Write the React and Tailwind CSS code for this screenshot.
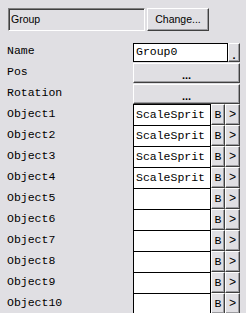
import React from "react";

const mono = { fontFamily: '"Liberation Mono", "Courier New", monospace' };

function RaisedButton({ className = "", children, style }) {
  return (
    <div
      className={
        "flex items-center justify-center bg-[#e0dfe3] border border-t-white border-l-white border-r-[#404040] border-b-[#404040] shadow-[inset_-1px_-1px_0_#9d9da1] " +
        className
      }
      style={style}
    >
      {children}
    </div>
  );
}

function LabelCell({ children }) {
  return (
    <div className="w-[133px] shrink-0 pl-[7px] pt-[3px] text-[11.5px] leading-[13px] text-black" style={mono}>
      {children}
    </div>
  );
}

function ObjectRow({ label, value }) {
  return (
    <div className="flex h-[21px]">
      <LabelCell>{label}</LabelCell>
      <div className="flex">
        <div
          className="w-[78px] h-[22px] bg-white border border-black pl-[2px] text-[11.5px] leading-[19px] text-black overflow-hidden whitespace-nowrap"
          style={mono}
        >
          {value}
        </div>
        <RaisedButton className="w-[14px] h-[21px] text-[11.5px] text-black leading-none" style={mono}>
          B
        </RaisedButton>
        <RaisedButton className="w-[15px] h-[21px] text-[12px] text-black leading-none" style={mono}>
          &gt;
        </RaisedButton>
      </div>
    </div>
  );
}

export default function App() {
  const objects = [
    ["Object1", "ScaleSprit"],
    ["Object2", "ScaleSprit"],
    ["Object3", "ScaleSprit"],
    ["Object4", "ScaleSprit"],
    ["Object5", ""],
    ["Object6", ""],
    ["Object7", ""],
    ["Object8", ""],
    ["Object9", ""],
    ["Object10", ""],
  ];
  return (
    <div className="w-[246px] h-[313px] bg-[#e0dfe3] overflow-hidden">
      <div className="flex pl-[8px] pt-[8px] h-[42px]">
        <div
          className="w-[137px] h-[23px] border border-t-[#808080] border-l-[#808080] border-r-white border-b-white shadow-[inset_1px_1px_0_#404040] pl-[2px] flex items-center text-[10.5px] text-black"
          style={{ fontFamily: '"Liberation Sans", Arial, sans-serif' }}
        >
          Group
        </div>
        <RaisedButton
          className="ml-[2px] w-[62px] h-[23px] text-[10.5px] text-black"
          style={{ fontFamily: '"Liberation Sans", Arial, sans-serif' }}
        >
          Change...
        </RaisedButton>
      </div>
      <div className="flex h-[20px]">
        <LabelCell>
          <span className="relative -top-px">Name</span>
        </LabelCell>
        <div className="flex pt-px">
          <div
            className="w-[95px] h-[19px] bg-white border border-black pl-[2px] text-[11.5px] leading-[16px] text-black"
            style={mono}
          >
            Group0
          </div>
          <RaisedButton
            className="w-[12px] h-[19px] text-[11px] font-bold text-black pt-[6px]"
            style={{ fontFamily: '"Liberation Sans", Arial, sans-serif' }}
          >
            .
          </RaisedButton>
        </div>
      </div>
      {["Pos", "Rotation"].map((l) => (
        <div key={l} className="flex h-[21px]">
          <LabelCell>{l}</LabelCell>
          <div className="pt-px">
            <RaisedButton
              className="w-[107px] h-[20px] text-[11px] font-bold text-black pt-[4px]"
              style={{ fontFamily: '"Liberation Sans", Arial, sans-serif' }}
            >
              ...
            </RaisedButton>
          </div>
        </div>
      ))}
      {objects.map(([l, v]) => (
        <ObjectRow key={l} label={l} value={v} />
      ))}
    </div>
  );
}
